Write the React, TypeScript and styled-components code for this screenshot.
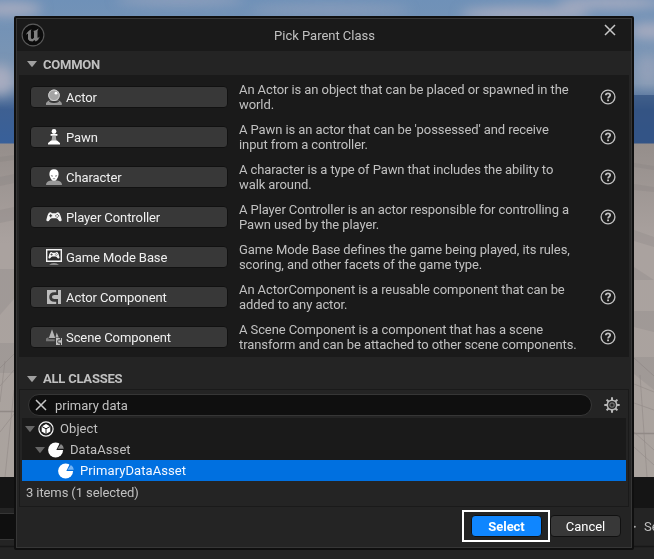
import React from "react";
import styled, { createGlobalStyle } from "styled-components";

const GlobalStyle = createGlobalStyle`
  * { box-sizing: border-box; }
  body { margin: 0; background: #242424; overflow: hidden; }
`;

const Desktop = styled.main`
  position: relative;
  width: 654px;
  height: 559px;
  overflow: hidden;
  padding: 16px 20px 9px 14px;
  background: #242424;
  font-family: Roboto, "Liberation Sans", sans-serif;
  font-size: 13px;
  line-height: 15px;
  color: #c0c0c0;
`;

const Scenery = styled.svg`
  position: absolute;
  inset: 0;
  display: block;
`;

const DrawerText = styled.span`
  position: absolute;
  left: 644px;
  top: 519px;
  white-space: nowrap;
  letter-spacing: -0.07px;
`;

const Dialog = styled.section`
  position: relative;
  width: 620px;
  height: 534px;
  border: 2px solid #0f0f0f;
  border-radius: 2px;
  background: #242424;
`;

const DialogFrame = styled.div`
  display: flex;
  flex-direction: column;
  height: 530px;
  border: 1px solid #363636;
`;

const TitleBar = styled.header`
  display: grid;
  grid-template-columns: 40px 1fr 40px;
  height: 32px;
  background: #1a1a1a;
`;

const LogoSlot = styled.div`
  padding: 4px 0 0 4px;
  height: 28px;
`;

const Title = styled.h1`
  margin: 0;
  padding: 9px 0 0 1px;
  text-align: center;
  font-size: 13px;
  line-height: 15px;
  font-weight: 400;
  letter-spacing: -0.02px;
`;

const CloseButton = styled.button`
  align-self: start;
  border: 0;
  padding: 5px 0 0 13px;
  background: none;
  text-align: left;
  line-height: 0;
`;

const SectionHeader = styled.h2<{ $height: number; $top: number }>`
  display: flex;
  align-items: center;
  gap: 6px;
  height: ${(p) => p.$height}px;
  margin: 0;
  padding: ${(p) => p.$top}px 0 0 10px;
  font-size: 13px;
  line-height: 15px;
  font-weight: 700;
  letter-spacing: -0.22px;
`;

const CommonList = styled.div`
  height: 282px;
  margin: 0 2px;
  padding-top: 2px;
  background: #1a1a1a;
`;

const ClassRow = styled.div`
  display: grid;
  grid-template-columns: 198px 350px 1fr;
  align-items: center;
  column-gap: 11px;
  height: 40px;
  padding-left: 11px;
`;

const ClassButton = styled.button`
  display: flex;
  align-items: center;
  gap: 4px;
  height: 22px;
  padding: 0 0 0 15px;
  border: 1px solid #111;
  border-radius: 4px;
  background: #383838;
  color: #f0f0f0;
  font: inherit;
  letter-spacing: -0.08px;
`;

const Description = styled.p`
  margin: 0;
  white-space: pre;
  letter-spacing: -0.09px;
`;

const HelpSlot = styled.div`
  height: 16px;
`;

const Picker = styled.div`
  height: 118px;
  margin: 0 2px;
  padding: 4px 2px 0;
  border: 1px solid #1a1a1a;
`;

const SearchRow = styled.div`
  display: flex;
  align-items: center;
  gap: 12px;
  height: 22px;
  padding-left: 6px;
`;

const SearchBox = styled.div`
  display: flex;
  align-items: center;
  gap: 8px;
  width: 564px;
  height: 22px;
  padding-left: 6px;
  border: 1px solid #363636;
  border-radius: 11px;
  background: #0f0f0f;
  letter-spacing: -0.02px;
`;

const Tree = styled.div`
  margin-top: 2px;
  background: #1a1a1a;
`;

const TreeRow = styled.div<{ $depth: number; $selected?: boolean }>`
  display: flex;
  align-items: center;
  height: 21px;
  padding-left: ${(p) => 3 + p.$depth * 10}px;
  background: ${(p) => (p.$selected ? "#0070e0" : "transparent")};
  color: ${(p) => (p.$selected ? "#f4f8ff" : "#c0c0c0")};
  letter-spacing: 0.08px;
`;

const ArrowSlot = styled.span`
  width: 13px;
  height: 6px;
  line-height: 0;
`;

const TreeIcon = styled.span`
  width: 22px;
  height: 16px;
  line-height: 0;
`;

const Status = styled.div`
  padding: 4px 0 0 4px;
  letter-spacing: -0.1px;
`;

const Footer = styled.footer`
  display: flex;
  justify-content: flex-end;
  padding: 3px 10px 0 0;
`;

const SelectHighlight = styled.div`
  width: 88px;
  height: 32px;
  padding: 3px 7px;
  border: 2px solid #fff;
`;

const ActionButton = styled.button<{ $primary?: boolean }>`
  display: block;
  width: 71px;
  height: 22px;
  padding: 0;
  border: 1px solid #111;
  border-radius: 4px;
  background: ${(p) => (p.$primary ? "#0f86ff" : "#383838")};
  color: #fff;
  font: inherit;
  font-weight: ${(p) => (p.$primary ? 700 : 400)};
  letter-spacing: -0.03px;
`;

const CancelSlot = styled.div`
  padding-top: 5px;
`;

const Triangle = ({ fill = "#a0a0a0" }: { fill?: string }) => (
  <svg width="10" height="6" viewBox="0 0 10 6">
    <path d="M0 0H10L5.6 5.6Q5 6.2 4.4 5.6Z" fill={fill} />
  </svg>
);

const Logo = () => (
  <svg width="24" height="24" viewBox="0 0 24 24">
    <circle cx="12" cy="12" r="10.9" fill="#0c0c0c" stroke="#5a5a5a" strokeWidth="1.1" />
    <path
      d="M4.8 12.2Q6.2 8 10.6 6.2L9.9 7.6V14.8Q10.2 16.2 11.6 16L13 14.8V8.8L12.2 8.1Q15 8 17.6 5.6L16.5 7.9V14.8Q17.4 15 18.9 13.4Q17.6 17.2 14.7 18.4L13.4 17L11.6 18.6Q8 18.4 7 16.2V10.8Q6.1 10.6 4.8 12.2Z"
      fill="#808080"
    />
  </svg>
);

const Cross = ({ size }: { size: number }) => (
  <svg width={size} height={size} viewBox="0 0 12 12">
    <path d="M1 1L11 11M11 1L1 11" stroke="#c8c8c8" strokeWidth="1.5" fill="none" />
  </svg>
);

const Help = () => (
  <svg width="16" height="16" viewBox="0 0 16 16" fill="none">
    <circle cx="8" cy="8" r="6.9" stroke="#c0c0c0" strokeWidth="1.35" />
    <path d="M5.8 6.3Q5.9 4.4 8 4.4Q10.2 4.4 10.2 6.1Q10.2 7 9.1 7.7Q8.1 8.4 8.1 9.6" stroke="#c0c0c0" strokeWidth="1.8" />
    <path d="M7.1 10.5H9V12.3H7.1Z" fill="#c0c0c0" />
  </svg>
);

const Gear = () => (
  <svg width="16" height="16" viewBox="0 0 16 16" fill="none" stroke="#b8b8b8">
    <path d="M8 .3V3M8 13V15.7M.3 8H3M13 8H15.7M2.6 2.6L4.5 4.5M11.5 11.5L13.4 13.4M2.6 13.4L4.5 11.5M11.5 4.5L13.4 2.6" strokeWidth="2" />
    <circle cx="8" cy="8" r="4.7" strokeWidth="1.6" />
    <circle cx="8" cy="8" r="2.2" stroke="#707070" strokeWidth="1.2" />
  </svg>
);

const PadShape = () => (
  <>
    <path
      d="M3 3.7Q4.7 2.8 6 4.2H10Q11.3 2.8 13 3.7Q14.4 5.3 15.7 10.9Q15.4 13 13.2 12Q11.6 9.5 10.3 9.3H5.7Q4.4 9.5 2.8 12Q.6 13 .3 10.9Q1.6 5.3 3 3.7Z"
      fill="#f4f4f4"
    />
    <path d="M4.7 5.2V8.2M3.2 6.7H6.2M11.2 5V6M11.2 7.8V8.8M9.3 6.9H10.3M12.1 6.9H13.1" stroke="#383838" strokeWidth="1.1" />
  </>
);

type IconKind = "actor" | "pawn" | "character" | "controller" | "mode" | "component" | "scene";

const ClassIcon = ({ kind }: { kind: IconKind }) => (
  <svg width="16" height="16" viewBox="0 0 16 16">
    {kind === "actor" && (
      <>
        <path d="M3 11H13L15.8 14V16H0V14Z" fill="#999" />
        <path d="M2.5 11.5Q4 13.5 8 13.5Q12 13.5 13.5 11.5" fill="#383838" stroke="#383838" />
        <circle cx="8" cy="6.3" r="5.8" fill="#a4a4a4" />
        <circle cx="8" cy="6.3" r="5.3" fill="none" stroke="#d0d0d0" />
        <circle cx="10" cy="4.2" r="1.4" fill="#fff" />
      </>
    )}
    {kind === "pawn" && (
      <>
        <path d="M6.2 7H9.8L10.5 12H5.5Z" fill="#a8a8a8" />
        <circle cx="8" cy="2.5" r="2.4" fill="#fff" />
        <path d="M4.6 5H11.4V6.8H4.6ZM5 11.6H11L14 14V15.6H2V14Z" fill="#fff" />
      </>
    )}
    {kind === "character" && (
      <>
        <path d="M0 16Q0 12 5 11.4H11Q16 12 16 16Z" fill="#999" />
        <path d="M8 .2Q12.6.4 12.6 5Q12.4 9.4 9.3 11.7H6.7Q3.6 9.4 3.4 5Q3.4.4 8 .2Z" fill="#fff" />
        <path d="M4.7 6.1L7 6.8V7.6H5.5ZM11.3 6.1L9 6.8V7.6H10.5Z" fill="#777" />
        <path d="M6.8 9.7H9.2" stroke="#999" />
      </>
    )}
    {kind === "controller" && <PadShape />}
    {kind === "mode" && (
      <>
        <path d="M.7.7H15.3V12.3H.7Z" stroke="#f4f4f4" strokeWidth="1.4" fill="#292929" />
        <g transform="translate(2.2 .7) scale(.72)">
          <PadShape />
        </g>
        <path d="M3 15.7Q8 13 13 15.7Z" fill="#aaa" />
      </>
    )}
    {kind === "component" && (
      <>
        <path d="M1 1H15V15H1Z" fill="#bdbdbd" />
        <path d="M11.6 4.6H8.4Q4.6 4.6 4.6 8Q4.6 11.4 8.4 11.4H11.6" fill="none" stroke="#383838" strokeWidth="2.7" />
        <path d="M10.2 1H12V6H10.2ZM10.2 10H12V15H10.2Z" fill="#383838" />
      </>
    )}
    {kind === "scene" && (
      <>
        <path d="M6 .2L9.2 9H2.9ZM10.7 3.4L12.8 8.4H9.5Z" fill="#b4b4b4" />
        <path d="M0 9.5L2.5 8V10.3H8.7V12.2H0Z" fill="#777" />
        <path d="M10 9H16V16H10Z" fill="#c0c0c0" />
        <path d="M14.6 10.9H12.6Q11.7 10.9 11.7 12.5Q11.7 14.1 12.6 14.1H14.6M14.4 9V11M14.4 14V16" stroke="#383838" strokeWidth="1" fill="none" />
      </>
    )}
  </svg>
);

const ObjectIcon = () => (
  <svg width="16" height="16" viewBox="0 0 16 16">
    <circle cx="8" cy="8" r="7.1" fill="#1a1a1a" stroke="#f2f2f2" strokeWidth="1.2" />
    <path d="M8 3L12.3 5.4V10.5L8 13L3.7 10.5V5.4Z" fill="#fff" />
    <path d="M3.9 5.5L8 7.8L12.1 5.5M8 7.8V13" stroke="#1a1a1a" strokeWidth="1" fill="none" />
  </svg>
);

const AssetIcon = ({ wedge, cut }: { wedge: string; cut: string }) => (
  <svg width="17" height="16" viewBox="0 0 17 16">
    <circle cx="7.6" cy="8" r="7.5" fill="#fff" />
    <path d="M8.3 8L12.6-.5H17V8Z" fill={cut} />
    <path d="M9.6 6.7L12.9 2Q15.7 3.8 15.8 6.7Z" fill={wedge} />
  </svg>
);

const classes: { kind: IconKind; name: string; text: string; help: boolean }[] = [
  { kind: "actor", name: "Actor", text: "An Actor is an object that can be placed or spawned in the\nworld.", help: true },
  { kind: "pawn", name: "Pawn", text: "A Pawn is an actor that can be 'possessed' and receive\ninput from a controller.", help: true },
  { kind: "character", name: "Character", text: "A character is a type of Pawn that includes the ability to\nwalk around.", help: true },
  { kind: "controller", name: "Player Controller", text: "A Player Controller is an actor responsible for controlling a\nPawn used by the player.", help: true },
  { kind: "mode", name: "Game Mode Base", text: "Game Mode Base defines the game being played, its rules,\nscoring, and other facets of the game type.", help: false },
  { kind: "component", name: "Actor Component", text: "An ActorComponent is a reusable component that can be\nadded to any actor.", help: true },
  { kind: "scene", name: "Scene Component", text: "A Scene Component is a component that has a scene\ntransform and can be attached to other scene components.", help: true },
];

const Landscape = () => (
  <Scenery width="654" height="559" viewBox="0 0 654 559">
    <defs>
      <linearGradient id="sky" x1="0" y1="0" x2="0" y2="1">
        <stop offset="0" stopColor="#6f91b8" />
        <stop offset=".58" stopColor="#7e96b2" />
        <stop offset=".76" stopColor="#3e6092" />
        <stop offset="1" stopColor="#38609a" />
      </linearGradient>
      <linearGradient id="ground" x1="0" y1="0" x2="0" y2="1">
        <stop offset="0" stopColor="#958e8b" />
        <stop offset=".3" stopColor="#aaa29f" />
        <stop offset="1" stopColor="#aaa39e" />
      </linearGradient>
      <filter id="soft" x="-30%" y="-80%" width="160%" height="260%">
        <feGaussianBlur stdDeviation="6" />
      </filter>
    </defs>
    <path d="M0 0H654V144H0Z" fill="url(#sky)" />
    <g filter="url(#soft)" fill="#a7acc0">
      <ellipse cx="10" cy="9" rx="32" ry="7" />
      <ellipse cx="0" cy="80" rx="14" ry="15" />
      <ellipse cx="180" cy="0" rx="65" ry="6" opacity=".55" />
      <ellipse cx="330" cy="10" rx="80" ry="5" opacity=".5" />
      <ellipse cx="525" cy="14" rx="65" ry="7" />
      <ellipse cx="610" cy="3" rx="54" ry="6" />
      <ellipse cx="650" cy="31" rx="20" ry="8" />
      <ellipse cx="648" cy="70" rx="12" ry="17" opacity=".5" />
    </g>
    <path d="M634 95H654V146H634Z" fill="#304f7d" opacity=".65" />
    <path d="M0 143.5H654V477H0Z" fill="url(#ground)" />
    <g fill="#81797a" opacity=".22">
      <path d="M0 157L14 155V160L0 162ZM0 177L14 174V183L0 186ZM0 210L14 207V220L0 223ZM0 269H14V299L0 315ZM0 343H14V373H0Z" />
      <path d="M634 163L654 166V170L634 167ZM634 184L654 187V192L634 190ZM634 230L654 237V247L634 241ZM634 267L654 280H634ZM634 311H654V332L634 327ZM634 357H654V390L634 374Z" />
    </g>
    <g stroke="#7d7674" strokeWidth=".6" opacity=".55" fill="none">
      <path d="M0 368L14 354M0 386L14 370M0 432L14 414M5 361L0 402M14 390L5 477M634 358L654 376M634 384L654 392M634 403L654 410M634 432L654 450M634 447L654 465M640 375L647 477" />
      <path d="M0 411.5H14M634 433.5H654" strokeWidth="1.7" />
    </g>
    <path d="M0 477H654V508H0Z" fill="#151515" />
    <path d="M0 508H654V559H0Z" fill="#242424" />
    <path d="M-5 513.5H20V539.5H-5Z" fill="#0f0f0f" stroke="#363636" />
    <path d="M0 546.5H654" stroke="#171717" strokeWidth="1.5" />
    <circle cx="634.8" cy="526.8" r="1" fill="#b0b0b0" />
  </Scenery>
);

export default function App() {
  return (
    <>
      <GlobalStyle />
      <Desktop>
        <Landscape />
        <DrawerText>Se</DrawerText>
        <Dialog>
          <DialogFrame>
            <TitleBar>
              <LogoSlot><Logo /></LogoSlot>
              <Title>Pick Parent Class</Title>
              <CloseButton aria-label="Close"><Cross size={12} /></CloseButton>
            </TitleBar>
            <SectionHeader $height={24} $top={2}><Triangle />COMMON</SectionHeader>
            <CommonList>
              {classes.map((c) => (
                <ClassRow key={c.name}>
                  <ClassButton><ClassIcon kind={c.kind} />{c.name}</ClassButton>
                  <Description>{c.text}</Description>
                  <HelpSlot>{c.help && <Help />}</HelpSlot>
                </ClassRow>
              ))}
            </CommonList>
            <SectionHeader $height={32} $top={11}><Triangle />ALL CLASSES</SectionHeader>
            <Picker>
              <SearchRow>
                <SearchBox><Cross size={12} />primary data</SearchBox>
                <Gear />
              </SearchRow>
              <Tree>
                <TreeRow $depth={0}>
                  <ArrowSlot><Triangle fill="#666" /></ArrowSlot>
                  <TreeIcon><ObjectIcon /></TreeIcon>Object
                </TreeRow>
                <TreeRow $depth={1}>
                  <ArrowSlot><Triangle fill="#666" /></ArrowSlot>
                  <TreeIcon><AssetIcon wedge="#888" cut="#1a1a1a" /></TreeIcon>DataAsset
                </TreeRow>
                <TreeRow $depth={2} $selected>
                  <ArrowSlot />
                  <TreeIcon><AssetIcon wedge="#75b4f5" cut="#0070e0" /></TreeIcon>PrimaryDataAsset
                </TreeRow>
              </Tree>
              <Status>3 items (1 selected)</Status>
            </Picker>
            <Footer>
              <SelectHighlight><ActionButton $primary>Select</ActionButton></SelectHighlight>
              <CancelSlot><ActionButton>Cancel</ActionButton></CancelSlot>
            </Footer>
          </DialogFrame>
        </Dialog>
      </Desktop>
    </>
  );
}
